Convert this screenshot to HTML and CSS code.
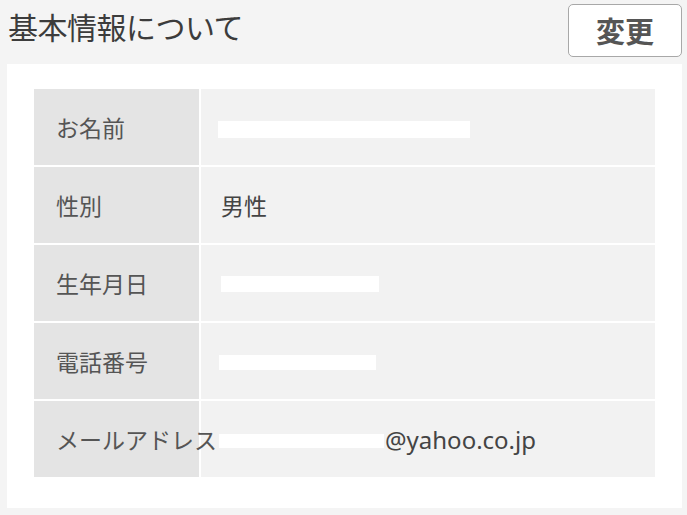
FILE: index.html
```html
<!DOCTYPE html>
<html lang="ja">
<head>
<meta charset="utf-8">
<link rel="stylesheet" href="styles.css">
</head>
<body>
<header class="header">
  <h1 class="title">基本情報について</h1>
  <button class="edit-btn">変更</button>
</header>
<section class="card">
  <div class="info-grid">
    <div class="label">お名前</div>
    <div class="value"><span class="mask mask-name"></span></div>
    <div class="label">性別</div>
    <div class="value">男性</div>
    <div class="label">生年月日</div>
    <div class="value"><span class="mask mask-birth"></span></div>
    <div class="label">電話番号</div>
    <div class="value"><span class="mask mask-phone"></span></div>
    <div class="label">メールアドレス</div>
    <div class="value"><span class="mask mask-mail"></span><span class="latin">@yahoo.co.jp</span></div>
  </div>
</section>
</body>
</html>
```
FILE: styles.css
```css
html, body {
  margin: 0;
  padding: 0;
}
body {
  background: #f4f4f4;
  font-family: "Noto Sans CJK JP", "Noto Sans", sans-serif;
  color: #444;
  width: 687px;
  height: 515px;
  overflow: hidden;
}
.header {
  display: flex;
  justify-content: space-between;
  align-items: flex-start;
  padding: 4px 5px 0 8px;
}
.title {
  margin: 0;
  font-size: 30px;
  font-weight: 400;
  line-height: 44px;
  color: #3c3c3c;
  letter-spacing: -0.5px;
}
.edit-btn {
  width: 114px;
  height: 53px;
  background: #fff;
  border: 1px solid #a8a8a8;
  border-radius: 5px;
  font-family: "Noto Sans CJK JP", sans-serif;
  font-size: 29px;
  font-weight: 700;
  color: #555;
  padding: 0;
  margin: 0;
  line-height: 1;
}
.card {
  background: #fff;
  margin: 7px 5px 0 7px;
  padding: 25px 27px 31px 27px;
}
.info-grid {
  display: grid;
  grid-template-columns: 165px 1fr;
  grid-auto-rows: 76px;
  column-gap: 2px;
  row-gap: 2px;
}
.label {
  background: #e4e4e4;
  display: flex;
  align-items: center;
  padding-left: 22px;
  font-size: 23px;
  color: #555;
  white-space: nowrap;
  z-index: 1;
}
.value {
  background: #f2f2f2;
  display: flex;
  align-items: center;
  padding-left: 20px;
  font-size: 23px;
  color: #444;
  white-space: nowrap;
}
.latin {
  font-family: "Noto Sans", sans-serif;
  font-size: 24px;
  color: #444;
}
.mask {
  display: inline-block;
  background: #fff;
}
.mask-name {
  width: 252px;
  height: 17px;
  margin-left: -3px;
  margin-top: 4px;
}
.mask-birth {
  width: 158px;
  height: 16px;
  margin-top: 2px;
}
.mask-phone {
  width: 157px;
  height: 15px;
  margin-left: -2px;
  margin-top: 2px;
}
.mask-mail {
  width: 165px;
  height: 14px;
  margin-left: -2px;
  margin-right: 1px;
  margin-top: 4px;
}
```
